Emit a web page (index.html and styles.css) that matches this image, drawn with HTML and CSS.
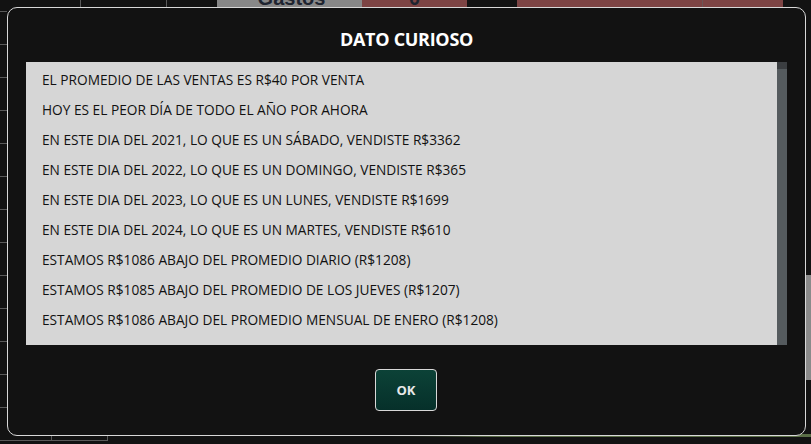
FILE: index.html
```html
<!DOCTYPE html>
<html lang="es">
<head>
<meta charset="utf-8">
<title>Dato curioso</title>
<link rel="stylesheet" href="styles.css">
</head>
<body>
<div class="sheet">
  <div class="top-row">
    <div class="cell c1"></div>
    <div class="cell c2"></div>
    <div class="cell c3"></div>
    <div class="cell gastos">Gastos</div>
    <div class="cell red r1">0</div>
    <div class="cell c4"></div>
    <div class="cell red r2"></div>
    <div class="cell red r3"></div>
  </div>
  <div class="left-lines">
    <i></i><i></i><i></i><i></i><i></i><i></i><i></i><i></i><i></i><i></i><i></i><i></i><i></i>
  </div>
  <div class="bottom-cells">
    <div class="bc b1"></div>
    <div class="bc b2"></div>
  </div>
  <div class="side-thumb"></div>
  <div class="green-glow"></div>
</div>

<div class="dialog">
  <h1 class="dialog-title">DATO CURIOSO</h1>
  <div class="list-wrap">
    <ul class="list">
      <li>EL PROMEDIO DE LAS VENTAS ES R$40 POR VENTA</li>
      <li>HOY ES EL PEOR DÍA DE TODO EL AÑO POR AHORA</li>
      <li>EN ESTE DIA DEL 2021, LO QUE ES UN SÁBADO, VENDISTE R$3362</li>
      <li>EN ESTE DIA DEL 2022, LO QUE ES UN DOMINGO, VENDISTE R$365</li>
      <li>EN ESTE DIA DEL 2023, LO QUE ES UN LUNES, VENDISTE R$1699</li>
      <li>EN ESTE DIA DEL 2024, LO QUE ES UN MARTES, VENDISTE R$610</li>
      <li>ESTAMOS R$1086 ABAJO DEL PROMEDIO DIARIO (R$1208)</li>
      <li>ESTAMOS R$1085 ABAJO DEL PROMEDIO DE LOS JUEVES (R$1207)</li>
      <li>ESTAMOS R$1086 ABAJO DEL PROMEDIO MENSUAL DE ENERO (R$1208)</li>
    </ul>
    <div class="scrollbar"><div class="scroll-top"></div></div>
  </div>
  <div class="actions">
    <button class="ok-btn">OK</button>
  </div>
</div>
</body>
</html>
```

FILE: styles.css
```css
* { box-sizing: border-box; }
html, body {
  margin: 0;
  padding: 0;
  width: 811px;
  height: 444px;
  overflow: hidden;
  background: #121212;
  font-family: "Open Sans", "Noto Sans", sans-serif;
}

.sheet {
  position: absolute;
  inset: 0;
}

.top-row {
  display: flex;
  height: 7px;
  overflow: hidden;
}
.cell {
  height: 7px;
  border-right: 1px solid #5a5a5a;
}
.c1 { width: 81px; }
.c2 { width: 86px; }
.c3 { width: 50px; border-right: none; }
.gastos {
  width: 145px;
  background: #888888;
  color: #1e2430;
  font-family: "Liberation Sans", sans-serif;
  font-weight: 700;
  font-size: 20px;
  line-height: 1;
  text-align: center;
  margin-top: -12px;
  height: 19px;
  padding-left: 4px;
  border-right: none;
}
.red { background: #7d4444; }
.r1 {
  width: 105px;
  color: #1e2430;
  font-family: "Liberation Sans", sans-serif;
  font-weight: 700;
  font-size: 20px;
  line-height: 1;
  text-align: center;
  margin-top: -12px;
  height: 19px;
  border-right: none;
}
.c4 { width: 50px; border-right: none; }
.r2 { width: 186px; border-right: 1px solid #6b5555; }
.r3 { width: 80px; border-right: none; }

.left-lines {
  position: absolute;
  left: 0;
  top: 11px;
  width: 7px;
  display: flex;
  flex-direction: column;
  gap: 32px;
}
.left-lines i {
  display: block;
  height: 1px;
  background: #5a5a5a;
}

.bottom-cells {
  position: absolute;
  left: 0;
  top: 436px;
  display: flex;
  height: 8px;
}
.bc {
  height: 8px;
  border-bottom: 1px solid #5a5a5a;
  border-right: 1px solid #5a5a5a;
  margin-top: -3px;
}
.b1 { width: 52px; }
.b2 { width: 56px; }

.side-thumb {
  position: absolute;
  left: 806px;
  top: 275px;
  width: 5px;
  height: 105px;
  background: #8a8a8a;
}
.green-glow {
  position: absolute;
  left: 370px;
  top: 434px;
  width: 441px;
  height: 3px;
  background: linear-gradient(90deg, rgba(90,110,70,0) 0%, #5a6e46 25%, #5a6e46 100%);
  border-radius: 50% 0 0 50%;
}

.dialog {
  position: absolute;
  left: 7px;
  top: 7px;
  width: 799px;
  height: 429px;
  background: #121212;
  border: 1.5px solid #d8d8d8;
  border-radius: 10px;
  display: flex;
  flex-direction: column;
  padding: 0 18px 0 18px;
}

.dialog-title {
  margin: 0;
  height: 54px;
  padding-top: 19px;
  text-align: center;
  color: #ffffff;
  font-family: "Open Sans", "Noto Sans", sans-serif;
  font-weight: 700;
  font-size: 18px;
  line-height: 24px;
  letter-spacing: -0.3px;
}

.list-wrap {
  display: flex;
  height: 283px;
  width: 761px;
}
.list {
  list-style: none;
  margin: 0;
  padding: 3px 0 0 16px;
  flex: 1;
  background: #d6d6d6;
  color: #111;
  font-family: "Open Sans", "Noto Sans", sans-serif;
  font-size: 13.7px;
  letter-spacing: 0;
}
.list li {
  height: 30px;
  line-height: 30px;
  white-space: nowrap;
}
.scrollbar {
  width: 10px;
  background: #555b5e;
}
.scroll-top {
  height: 7px;
  background: #3b3e41;
}

.actions {
  display: flex;
  justify-content: center;
  padding-top: 24px;
}
.ok-btn {
  width: 62px;
  height: 42px;
  margin-left: -1px;
  border: 1.5px solid #d8d8d8;
  border-radius: 4px;
  background: linear-gradient(180deg, #0c4237 0%, #06302a 100%);
  color: #e8e8e8;
  font-family: "Open Sans", "Noto Sans", sans-serif;
  font-weight: 700;
  font-size: 13px;
  cursor: pointer;
}
```
